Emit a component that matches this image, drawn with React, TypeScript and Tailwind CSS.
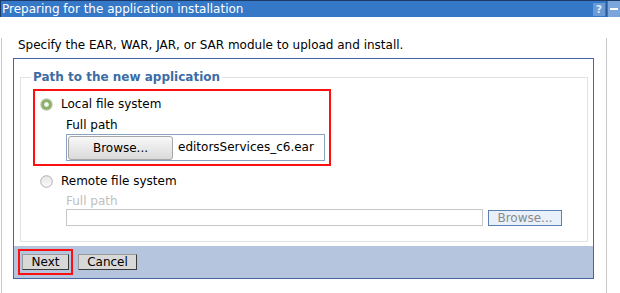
export default function App() {
  const RadioOn = () => (
    <svg width="13" height="13" viewBox="0 0 13 13" className="shrink-0">
      <circle cx="6.5" cy="6.5" r="6.2" fill="#c4c8c0" />
      <circle cx="6.5" cy="6.5" r="5.3" fill="#8db766" />
      <circle cx="6.5" cy="6.5" r="2.9" fill="#f6f8f2" stroke="#5f8a3c" strokeWidth="0.7" />
    </svg>
  );
  const RadioOff = () => (
    <svg width="13" height="13" viewBox="0 0 13 13" className="shrink-0">
      <defs>
        <linearGradient id="rg" x1="0" y1="0" x2="0" y2="1">
          <stop offset="0" stopColor="#e6e6e6" />
          <stop offset="1" stopColor="#fafafa" />
        </linearGradient>
      </defs>
      <circle cx="6.5" cy="6.5" r="5.8" fill="url(#rg)" stroke="#a8a8a8" strokeWidth="0.9" />
    </svg>
  );
  const btn = "h-[16px] bg-[#d8d8d8] border border-t-[#9a9a9a] border-l-[#9a9a9a] border-r-[#3a3a3a] border-b-[#3a3a3a] text-black leading-[14px] flex items-center justify-center";

  return (
    <div className="w-[620px] h-[293px] bg-white overflow-hidden font-['DejaVu_Sans',sans-serif] text-[12px] text-black">
      {/* title bar */}
      <div className="flex h-[17px] bg-[#3578c8] border-t border-l border-[#1d3b66] items-center">
        <span className="flex-1 pl-[1px] text-white leading-[15px] whitespace-nowrap">Preparing for the application installation</span>
        <span className="w-[12px] h-[13px] bg-[#6a9ad6] text-[#dfeaf8] text-[11px] font-bold leading-[13px] text-center">?</span>
        <span className="w-[1px] h-[16px] bg-[#2a5a9a] mx-[1px]" />
        <span className="w-[12px] h-[16px] bg-[#7aa6dc] flex items-center justify-center">
          <span className="w-[8px] h-[2px] bg-white" />
        </span>
      </div>

      {/* frame */}
      <div className="ml-[1px] w-[606px] h-[275px] border-l border-r border-b border-[#c8c8c8]">
        <p className="ml-[16px] mt-[21px] leading-[14px] whitespace-nowrap">Specify the EAR, WAR, JAR, or SAR module to upload and install.</p>

        <div className="ml-[11px] mt-[6px] w-[581px] h-[221px] border border-[#4764a3]">
          <fieldset className="ml-[6px] mt-[11px] w-[568px] border border-[#e2e2e2] pl-[12px] pt-[5px] pb-[15px]">
            <legend className="-ml-[2px] px-[2px] font-bold text-[#3c6ca4] leading-[14px]">Path to the new application</legend>

            <div className="w-[298px] border-2 border-[#ff1010] pt-[6px] pb-[3px]">
              <div className="flex items-center h-[14px] pl-[5px]">
                <RadioOn />
                <span className="ml-[8px] leading-[14px] whitespace-nowrap">Local file system</span>
              </div>
              <div className="pl-[31px] mt-[7px]">
                <div className="leading-[14px]">Full path</div>
                <div className="mt-[2px] w-[259px] h-[27px] border border-[#8aa4c0] p-[1px] pb-0 flex items-start">
                  <div className="w-[105px] h-[24px] rounded-[3px] border border-[#a6a6a6] bg-gradient-to-b from-[#f8f8f8] to-[#dadada] flex items-center justify-center leading-[14px]">Browse...</div>
                  <span className="ml-[5px] mt-[4px] leading-[14px] whitespace-nowrap">editorsServices_c6.ear</span>
                </div>
              </div>
            </div>

            <div className="flex items-center h-[14px] pl-[7px] mt-[8px]">
              <RadioOff />
              <span className="ml-[8px] leading-[14px] whitespace-nowrap">Remote file system</span>
            </div>
            <div className="pl-[33px] mt-[6px]">
              <div className="leading-[14px] text-[#c0c0c0]">Full path</div>
              <div className="mt-[1px] flex items-start">
                <div className="w-[417px] h-[17px] border border-[#c8c8c8] bg-white" />
                <div className="ml-[5px] mt-[1px] w-[74px] h-[16px] border border-[#5a80b4] bg-[#e8f0fc] text-[#8a8a8a] leading-[14px] flex items-center justify-center">Browse...</div>
              </div>
            </div>
          </fieldset>

          <div className="mt-[4px] h-[32px] bg-[#b5c5dd] flex items-center pl-[4px]">
            <div className="w-[55px] h-[26px] border-2 border-[#ff1010] flex items-center justify-center">
              <div className={`${btn} w-[47px]`}>Next</div>
            </div>
            <div className={`${btn} w-[59px] ml-[5px]`}>Cancel</div>
          </div>
        </div>
      </div>
    </div>
  );
}
